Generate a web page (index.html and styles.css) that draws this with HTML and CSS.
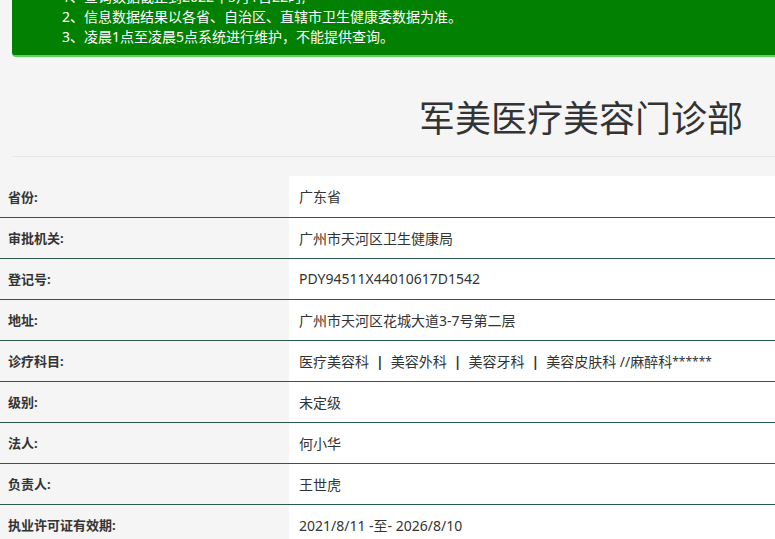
FILE: index.html
```html
<!DOCTYPE html>
<html lang="zh-CN">
<head>
<meta charset="utf-8">
<title>军美医疗美容门诊部</title>
<link rel="stylesheet" href="styles.css">
</head>
<body>
<div class="banner">
  <p>1、查询数据截止到2022年5月1日22时;</p>
  <p>2、信息数据结果以各省、自治区、直辖市卫生健康委数据为准。</p>
  <p>3、凌晨1点至凌晨5点系统进行维护，不能提供查询。</p>
</div>
<div class="title-bar"><h1>军美医疗美容门诊部</h1></div>
<table class="info">
  <tr><th>省份:</th><td>广东省</td></tr>
  <tr><th>审批机关:</th><td>广州市天河区卫生健康局</td></tr>
  <tr><th>登记号:</th><td>PDY94511X44010617D1542</td></tr>
  <tr><th>地址:</th><td>广州市天河区花城大道3-7号第二层</td></tr>
  <tr><th>诊疗科目:</th><td>医疗美容科<span class="sep">|</span>美容外科<span class="sep">|</span>美容牙科<span class="sep">|</span>美容皮肤科 //麻醉科<span class="stars">******</span></td></tr>
  <tr><th>级别:</th><td>未定级</td></tr>
  <tr><th>法人:</th><td>何小华</td></tr>
  <tr><th>负责人:</th><td>王世虎</td></tr>
  <tr><th>执业许可证有效期:</th><td>2021/8/11 -至- 2026/8/10</td></tr>
</table>
</body>
</html>
```
FILE: styles.css
```css
html, body {
  margin: 0;
  padding: 0;
  background: #f5f5f5;
  font-family: "Noto Sans", "Noto Sans CJK SC", sans-serif;
  color: #333;
  overflow: hidden;
}
.banner {
  margin: -13px 0 0 12px;
  padding: 0 0 8px 50px;
  background: #028002;
  border-bottom: 2px solid #5bd25b;
  border-radius: 0 0 0 4px;
  color: #fff;
  font-size: 14px;
  line-height: 20px;
}
.banner p { margin: 0; }
.title-bar {
  margin-left: 12px;
  height: 99px;
  border-bottom: 1px solid #e8e8e8;
  display: flex;
  align-items: center;
  justify-content: flex-end;
  padding-right: 32px;
}
.title-bar h1 {
  margin: 0;
  margin-top: 18px;
  font-size: 36px;
  font-weight: 400;
  color: #333;
  line-height: 1;
  font-family: "Noto Sans CJK SC", sans-serif;
}
.info {
  margin-top: 19px;
  width: 100%;
  border-collapse: collapse;
  font-size: 14px;
}
.info tr { height: 41px; border-bottom: 1px solid #2b5b47; }
.info th {
  width: 289px;
  box-sizing: border-box;
  text-align: left;
  padding: 0 0 0 8px;
  font-size: 13px;
  font-weight: 700;
  color: #333;
  background: #f5f5f5;
}
.info td {
  padding: 0 0 0 10px;
  background: #fff;
  color: #333;
}
.sep {
  margin: 0 7px;
  font-weight: 700;
}
.stars {
  font-size: 12px;
  vertical-align: 1px;
}
```
